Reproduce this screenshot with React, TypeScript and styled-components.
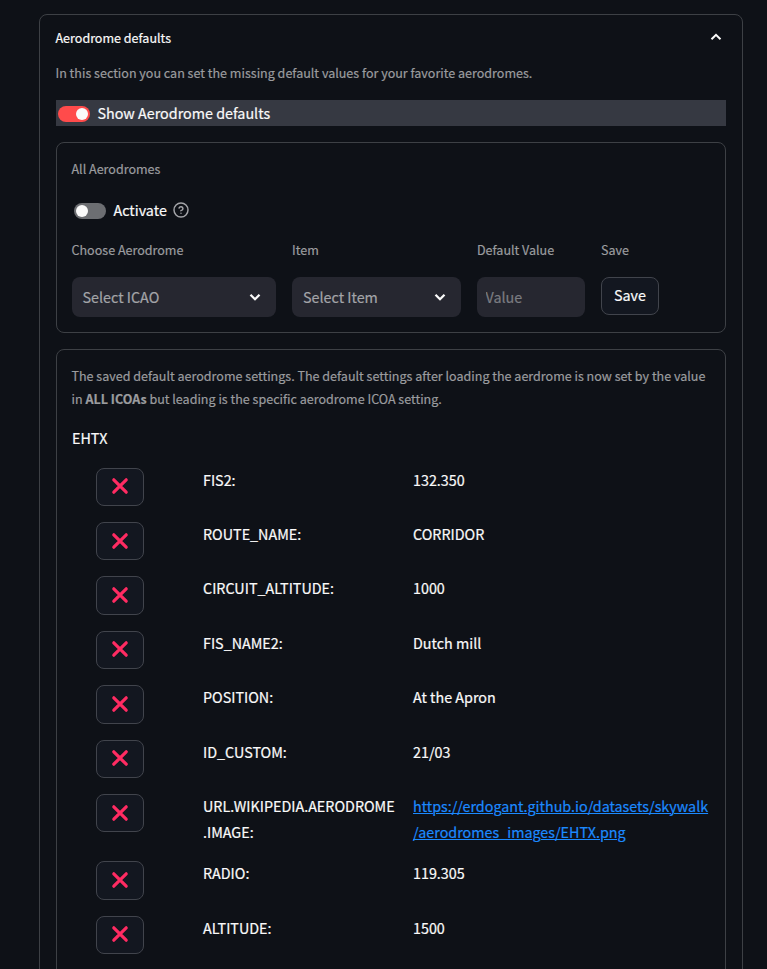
import React from "react";
import styled, { createGlobalStyle } from "styled-components";

const GlobalStyle = createGlobalStyle`
  *, *::before, *::after { box-sizing: border-box; }
  html, body { margin: 0; padding: 0; background: #0e1117; }
  body {
    height: 969px;
    overflow: hidden;
    color: #fafafa;
    font-family: "Noto Sans CJK SC", "Noto Sans", sans-serif;
    font-size: 14.33px;
    line-height: 25.6px;
    -webkit-text-stroke: 0.2px;
  }
`;

const Page = styled.main`
  height: 969px;
  overflow: hidden;
  padding: 14px 24px 0 39px;
`;

const Expander = styled.section`
  height: 1100px;
  border: 1px solid #3d4045;
  border-radius: 8px;
  padding: 0 16px;
`;

const Summary = styled.header`
  display: flex;
  align-items: center;
  justify-content: space-between;
  height: 47px;
  padding: 0 4px 3px 0;
  font-size: 12.54px;
`;

const Title = styled.span`
  margin: 2px 0 0 -0.5px;
`;

const Stack = styled.div`
  display: flex;
  flex-direction: column;
  gap: 16px;
`;

const Caption = styled.p`
  margin: 0 0 0 -0.5px;
  color: #9b9c9f;
  font-size: 12.54px;
  line-height: 22.4px;
  white-space: nowrap;
`;

const FieldLabel = styled(Caption)`
  padding-top: 1px;
  margin-bottom: -1px;
  & ~ & { margin-left: 0; }
`;

const SavedNote = styled(Caption)`
  margin-top: -0.8px;
  margin-bottom: -0.4px;
  line-height: 23px;
`;

const ToggleLine = styled.label<{ $highlight?: boolean }>`
  display: flex;
  align-items: center;
  height: 25.6px;
  padding: ${(p) => (p.$highlight ? "0 0 0 2px" : "1px 0 0 2px")};
  background: ${(p) => (p.$highlight ? "#363942" : "transparent")};
`;

const Track = styled.span<{ $on?: boolean }>`
  display: flex;
  align-items: center;
  justify-content: ${(p) => (p.$on ? "flex-end" : "flex-start")};
  width: 32px;
  height: 16px;
  margin: 1.6px 7.5px 0 0;
  padding: 0 2px;
  border-radius: 8px;
  background: ${(p) => (p.$on ? "#ff4b4b" : "#6c6e72")};
`;

const Knob = styled.span`
  width: 12px;
  height: 12px;
  border-radius: 50%;
  background: #fafafa;
`;

const HelpIcon = styled.svg`
  margin: 0 0 0 6px;
`;

const Panel = styled.section<{ $tall?: boolean }>`
  display: flex;
  flex-direction: column;
  gap: 16px;
  height: ${(p) => (p.$tall ? "700px" : "auto")};
  padding: ${(p) => (p.$tall ? "15px" : "15.4px 15px")};
  border: 1px solid #3d4045;
  border-radius: 8px;
`;

const FormGrid = styled.div`
  display: grid;
  grid-template-columns: 204px 169px 108px 58px;
  gap: 16px;
`;

const Select = styled.div`
  display: flex;
  align-items: center;
  justify-content: space-between;
  height: 40px;
  padding: 0 15px 0 10.5px;
  border-radius: 8px;
  background: #262730;
  color: #a3a4a8;
  line-height: 40px;
  & + & { padding-left: 11px; }
`;

const Input = styled.input`
  width: 100%;
  height: 40px;
  padding: 0 8.5px;
  border: 0;
  border-radius: 8px;
  background: #262730;
  color: #fafafa;
  font: inherit;
  &::placeholder { color: #7b7c81; opacity: 1; }
`;

const Button = styled.button<{ $wide?: boolean }>`
  display: flex;
  align-items: center;
  justify-content: center;
  height: 38.4px;
  width: ${(p) => (p.$wide ? "58px" : "48px")};
  padding: ${(p) => (p.$wide ? "0 0 3px" : "0 0 1px")};
  border: 1px solid #41444c;
  border-radius: 8px;
  background: #131720;
  color: #fafafa;
  font: inherit;
`;

const Code = styled.div`
  height: 25.6px;
  margin: -1px 0 1px;
`;

const Row = styled.div`
  display: grid;
  grid-template-columns: 91px 194px 297px;
  column-gap: 16px;
  align-items: start;
  padding-left: 24px;
`;

const Cell = styled.div`
  margin: -1px 0 1px;
`;

const Line = styled.div`
  white-space: nowrap;
`;

const Link = styled.a`
  color: #1c8aff;
  text-decoration: underline;
  text-decoration-thickness: 1px;
  text-underline-offset: 1px;
  text-decoration-skip-ink: auto;
`;

const Chevron = ({ up, weight }: { up?: boolean; weight: number }) => (
  <svg width="12" height="8" viewBox="0 0 12 8" fill="none" stroke="#fafafa" strokeWidth={weight}>
    <path d={up ? "M1.5 6.3 6 1.8l4.5 4.5" : "M1.5 1.7 6 6.2l4.5-4.5"} />
  </svg>
);

const Cross = () => (
  <svg width="18" height="18" viewBox="0 0 18 18" stroke="#ff2b62" strokeWidth="3.2" strokeLinecap="round">
    <path d="M2.8 2.8 15.2 15.2M15.2 2.8 2.8 15.2" />
  </svg>
);

const settings: { name: string[]; value: string[]; link?: boolean }[] = [
  { name: ["FIS2:"], value: ["132.350"] },
  { name: ["ROUTE_NAME:"], value: ["CORRIDOR"] },
  { name: ["CIRCUIT_ALTITUDE:"], value: ["1000"] },
  { name: ["FIS_NAME2:"], value: ["Dutch mill"] },
  { name: ["POSITION:"], value: ["At the Apron"] },
  { name: ["ID_CUSTOM:"], value: ["21/03"] },
  {
    name: ["URL.WIKIPEDIA.AERODROME", ".IMAGE:"],
    value: ["https://erdogant.github.io/datasets/skywalk", "/aerodromes_images/EHTX.png"],
    link: true,
  },
  { name: ["RADIO:"], value: ["119.305"] },
  { name: ["ALTITUDE:"], value: ["1500"] },
];

export default function App() {
  return (
    <Page>
      <GlobalStyle />
      <Expander>
        <Summary>
          <Title>Aerodrome defaults</Title>
          <Chevron up weight={2} />
        </Summary>
        <Stack>
          <Caption>In this section you can set the missing default values for your favorite aerodromes.</Caption>
          <ToggleLine $highlight>
            <Track $on><Knob /></Track>
            Show Aerodrome defaults
          </ToggleLine>
          <Panel>
            <Caption>All Aerodromes</Caption>
            <ToggleLine>
              <Track><Knob /></Track>
              Activate
              <HelpIcon width="16" height="16" viewBox="0 0 24 24" fill="none" stroke="#a3a4a8" strokeWidth="2.2" strokeLinecap="round" strokeLinejoin="round">
                <circle cx="12" cy="12" r="10.5" />
                <path d="M9.09 9a3 3 0 0 1 5.83 1c0 2-3 3-3 3M12 17h.01" />
              </HelpIcon>
            </ToggleLine>
            <FormGrid>
              <FieldLabel>Choose Aerodrome</FieldLabel>
              <FieldLabel>Item</FieldLabel>
              <FieldLabel>Default Value</FieldLabel>
              <FieldLabel>Save</FieldLabel>
              <Select>Select ICAO<Chevron weight={2.3} /></Select>
              <Select>Select Item<Chevron weight={2.3} /></Select>
              <Input placeholder="Value" />
              <Button $wide>Save</Button>
            </FormGrid>
          </Panel>
          <Panel $tall>
            <SavedNote>
              The saved default aerodrome settings. The default settings after loading the aerdrome is now set by the value
              <br />
              in <b>ALL ICOAs</b> but leading is the specific aerodrome ICOA setting.
            </SavedNote>
            <Code>EHTX</Code>
            {settings.map((s) => (
              <Row key={s.name[0]}>
                <Button aria-label="Remove"><Cross /></Button>
                <Cell>{s.name.map((t) => <Line key={t}>{t}</Line>)}</Cell>
                <Cell>
                  {s.value.map((t) => <Line key={t}>{s.link ? <Link>{t}</Link> : t}</Line>)}
                </Cell>
              </Row>
            ))}
          </Panel>
        </Stack>
      </Expander>
    </Page>
  );
}
